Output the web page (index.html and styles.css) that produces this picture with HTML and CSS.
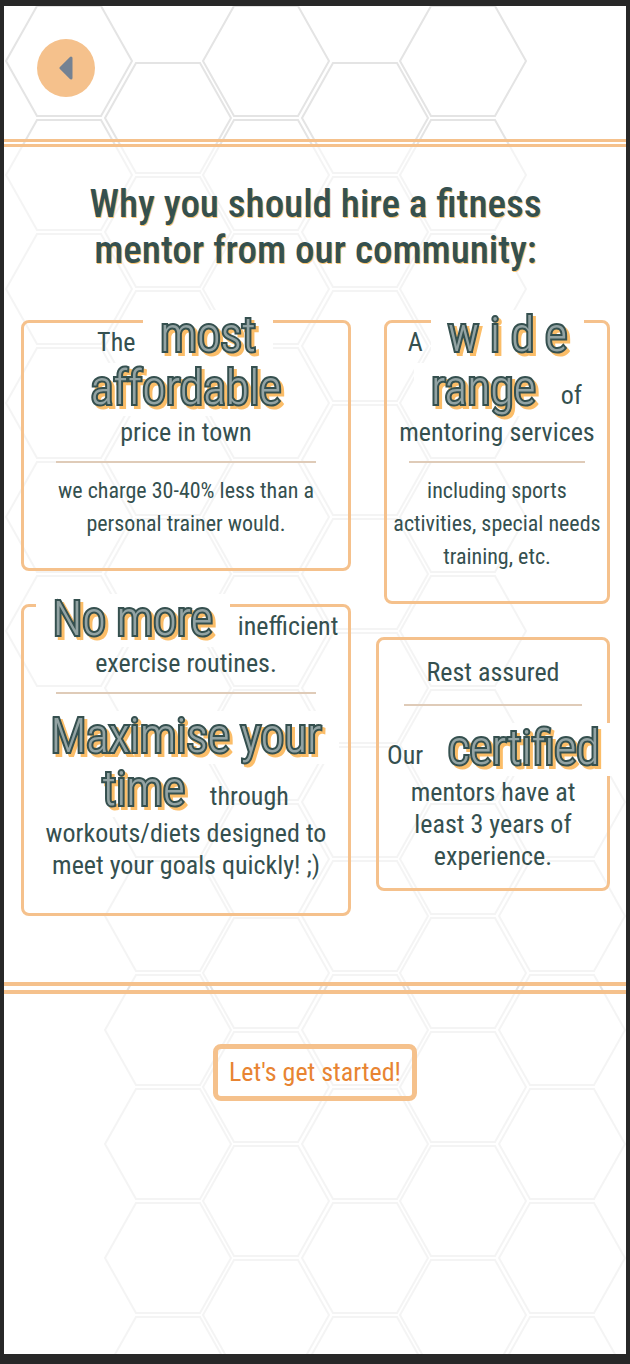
FILE: index.html
```html
<!DOCTYPE html>
<html lang="en">
<head>
<meta charset="utf-8">
<meta name="viewport" content="width=device-width, initial-scale=1">
<title>Hire a fitness mentor</title>
<link rel="stylesheet" href="styles.css">
</head>
<body>
<div class="screen">
  <svg class="honeycomb" aria-hidden="true">
    <defs>
      <path id="hex" d="M0 55L31 0H95L126 55L95 110H31Z"/>
      <g id="half">
        <use href="#hex"/><use href="#hex" y="114"/><use href="#hex" y="228"/>
        <use href="#hex" y="342"/><use href="#hex" y="456"/><use href="#hex" y="570"/>
      </g>
    </defs>
    <g fill="none" stroke="#e4e4e4" stroke-width="2">
      <use href="#half" x="2" y="0"/>
      <use href="#half" x="101" y="57"/><use href="#half" x="101" y="741"/>
      <use href="#half" x="199" y="0"/><use href="#half" x="199" y="684"/>
      <use href="#half" x="298" y="57"/><use href="#half" x="298" y="741"/>
      <use href="#half" x="396" y="0"/><use href="#half" x="396" y="684"/>
      <use href="#half" x="495" y="741"/>
    </g>
  </svg>

  <header class="topbar">
    <button class="back" type="button" aria-label="Back">
      <svg width="14" height="24" viewBox="0 0 14 24" aria-hidden="true"><path d="M12 2V22L2 12Z" fill="#748293" stroke="#748293" stroke-width="3" stroke-linejoin="round"/></svg>
    </button>
  </header>

  <main class="panel">
    <h1 class="title">Why you should hire a fitness mentor from our community:</h1>
    <div class="columns">
      <div class="column column-left">
        <section class="card raised">
          <h2 class="lead"><span class="row">The <span class="fancy"><span class="ink">most</span></span></span><span class="row"><span class="fancy"><span class="ink">affordable</span></span></span><span class="row">price in town</span></h2>
          <hr class="rule">
          <p class="detail">we charge 30-40% less than a personal trainer would.</p>
        </section>
        <section class="card raised tall">
          <h2 class="lead"><span class="row"><span class="fancy"><span class="ink">No more</span></span> inefficient</span><span class="row">exercise routines.</span></h2>
          <hr class="rule">
          <p class="lead follow"><span class="row"><span class="fancy"><span class="ink">Maximise your</span></span></span><span class="row"><span class="fancy"><span class="ink">time</span></span> through</span> workouts/diets designed to meet your goals quickly! ;)</p>
        </section>
      </div>
      <div class="column column-right">
        <section class="card raised inset">
          <h2 class="lead"><span class="row">A <span class="fancy"><span class="ink">w i d e</span></span></span><span class="row"><span class="fancy"><span class="ink">range</span></span> of</span><span class="row">mentoring services</span></h2>
          <hr class="rule">
          <p class="detail">including sports activities, special needs training, etc.</p>
        </section>
        <section class="card plain">
          <h2 class="lead">Rest assured</h2>
          <hr class="rule">
          <p class="lead follow"><span class="row start">Our <span class="fancy"><span class="ink">certified</span></span></span><span class="narrow">mentors have at least 3 years of experience.</span></p>
        </section>
      </div>
    </div>
  </main>

  <footer class="bottom">
    <button class="start-button" type="button">Let's get started!</button>
  </footer>
</div>
</body>
</html>
```
FILE: styles.css
```css
* { box-sizing: border-box; }

body {
  margin: 0;
  min-height: 100vh;
  display: flex;
  padding: 6px 4px 10px;
  background: #282828;
  color: #35504f;
  font-family: "Roboto Condensed", "Liberation Sans Narrow", Roboto, sans-serif;
}

h1, h2, p { margin: 0; font-weight: 400; }

.screen {
  position: relative;
  display: flex;
  flex-direction: column;
  flex: 1;
  min-width: 0;
  overflow: hidden;
  background: #fff;
}

.honeycomb {
  position: absolute;
  inset: 0;
  width: 100%;
  height: 100%;
}

.topbar {
  position: relative;
  padding: 33px;
  height: 133px;
}

.back {
  display: flex;
  align-items: center;
  justify-content: center;
  width: 58px;
  height: 58px;
  padding: 0;
  border: 0;
  border-radius: 50%;
  background: #f5c18c;
}

.panel {
  position: relative;
  padding: 34px 16px 66px 17px;
  border-top: 8px double #f5c18c;
  border-bottom: 12px double #f5c18c;
  background: rgba(255, 255, 255, .6);
  background-clip: padding-box;
}

.title {
  max-width: 500px;
  margin: 0 auto 47px;
  font-size: 39px;
  line-height: 46px;
  font-weight: 500;
  text-align: center;
  text-shadow: 1px 1px 0 #fbc774;
}

.columns { display: flex; gap: 25px; }

.column {
  display: flex;
  flex-direction: column;
  gap: 33px;
  min-width: 0;
}

.column-left { flex: 330; }
.column-right { flex: 234; }

.card {
  padding: 0 3px 28px;
  border: 3px solid #f5c18c;
  border-radius: 8px;
  text-align: center;
}

.raised .lead:first-child { margin-top: -13px; }
.inset { margin-left: 8px; }
.tall { padding-bottom: 32px; }
.plain { padding: 16px 3px; }

.lead { font-size: 26px; line-height: 32px; }
.row { display: block; white-space: nowrap; }
.start { padding-left: 5px; text-align: left; }

.fancy {
  display: inline-block;
  margin: 0 2px;
  padding: 0 17px 4px;
  background: #fff;
  color: #93a3a3;
  font-size: 48px;
  line-height: 49px;
  font-weight: 300;
}

.ink {
  display: inline-block;
  -webkit-text-stroke: 4px #35504f;
  paint-order: stroke fill;
  filter: drop-shadow(3px 3px 0 #fbbd68);
}

.rule {
  width: 82%;
  height: 2px;
  margin: 13px auto 11px;
  border: 0;
  background: #dfcbb8;
}

.plain .rule { width: 80%; margin-top: 16px; }

.detail { font-size: 22px; line-height: 33px; }
.follow { margin-top: 17px; }
.narrow { display: block; padding: 0 20px; }

.bottom {
  position: relative;
  display: flex;
  flex: 1;
  align-items: flex-start;
  justify-content: center;
  padding: 50px 16px;
  background: rgba(255, 255, 255, .6);
}

.start-button {
  padding: 7px 11px;
  border: 5px solid #f5c18c;
  border-radius: 8px;
  background: transparent;
  color: #e88432;
  font: inherit;
  font-size: 26px;
  line-height: 33px;
}
```
